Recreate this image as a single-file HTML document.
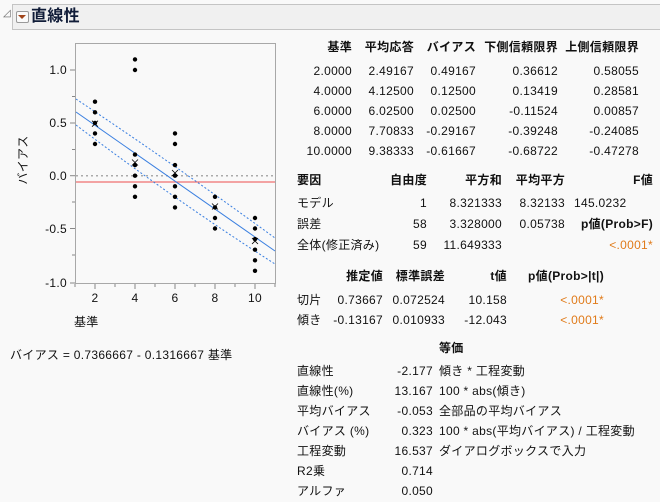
<!DOCTYPE html>
<html><head><meta charset="utf-8"><style>
body{margin:0;width:660px;height:502px;background:#f9f9f9;font-family:"Liberation Sans","Noto Sans CJK JP",sans-serif;font-size:12px;color:#111;position:relative;overflow:hidden;letter-spacing:0.3px}
.a{position:absolute;white-space:nowrap;line-height:14px}
.b{font-weight:bold}
.r{text-align:right}
.o{color:#e07b1a}
</style></head><body>
<div class="a" style="left:3px;top:7px;font-size:10px;color:#666">◿</div>
<div style="position:absolute;left:12px;top:4px;width:650px;height:24px;background:#f0f0f0;border:1px solid #c4c4c4"></div>
<div style="position:absolute;left:16px;top:11px;width:11px;height:10px;border:1px solid #999;border-radius:2px;background:#fafafa"></div>
<div style="position:absolute;left:18px;top:15px;width:0;height:0;border-left:4px solid transparent;border-right:4px solid transparent;border-top:4px solid #a0451a"></div>
<div class="a b" style="left:31px;top:8px;font-size:16px;line-height:18px;color:#101c38">直線性</div>

<svg style="position:absolute;left:0;top:0" width="300" height="340">
<rect x="75.5" y="43.5" width="200" height="240" fill="#f9f9f9" stroke="#a8a8a8"/>
<g stroke="#888" stroke-width="1">
<line x1="70" y1="70" x2="75" y2="70"/><line x1="70" y1="123" x2="75" y2="123"/><line x1="70" y1="175.7" x2="75" y2="175.7"/><line x1="70" y1="228.5" x2="75" y2="228.5"/><line x1="70" y1="283" x2="75" y2="283"/>
<line x1="72" y1="96.5" x2="75" y2="96.5"/><line x1="72" y1="149.5" x2="75" y2="149.5"/><line x1="72" y1="202" x2="75" y2="202"/><line x1="72" y1="255" x2="75" y2="255"/>
<line x1="95" y1="284" x2="95" y2="289"/><line x1="135" y1="284" x2="135" y2="289"/><line x1="175" y1="284" x2="175" y2="289"/><line x1="215" y1="284" x2="215" y2="289"/><line x1="255" y1="284" x2="255" y2="289"/>
<line x1="75" y1="284" x2="75" y2="287"/><line x1="115" y1="284" x2="115" y2="287"/><line x1="155" y1="284" x2="155" y2="287"/><line x1="195" y1="284" x2="195" y2="287"/><line x1="235" y1="284" x2="235" y2="287"/><line x1="275" y1="284" x2="275" y2="287"/>
</g>
<g font-family="Liberation Sans" font-size="12" fill="#111" text-anchor="end" letter-spacing="0.3">
<text x="67" y="74">1.0</text><text x="67" y="127">0.5</text><text x="67" y="180">0.0</text><text x="67" y="233">-0.5</text><text x="67" y="287">-1.0</text>
</g>
<g font-family="Liberation Sans" font-size="12" fill="#111" text-anchor="middle">
<text x="95" y="302">2</text><text x="135" y="302">4</text><text x="175" y="302">6</text><text x="215" y="302">8</text><text x="255" y="302">10</text>
</g>
<text transform="translate(27,160) rotate(-90)" font-size="12" fill="#111" text-anchor="middle" font-family="Liberation Sans,Noto Sans CJK JP">バイアス</text>
<line x1="76" y1="175.7" x2="275" y2="175.7" stroke="#aaa" stroke-width="1.5" stroke-dasharray="2,3"/>
<line x1="76" y1="182" x2="275" y2="182" stroke="#f07070" stroke-width="1.2"/>
<line x1="76" y1="112" x2="275" y2="251" stroke="#3a7fe0" stroke-width="1"/>
<path d="M76 99 Q175 165 275 238" fill="none" stroke="#3a7fe0" stroke-dasharray="2,2"/>
<path d="M76 125 Q175 200 275 264" fill="none" stroke="#3a7fe0" stroke-dasharray="2,2"/>
<g fill="#000">
<circle cx="95" cy="101.7" r="2.2"/><circle cx="95" cy="112.3" r="2.2"/><circle cx="95" cy="122.9" r="2.2"/><circle cx="95" cy="133.4" r="2.2"/><circle cx="95" cy="144" r="2.2"/>
<circle cx="135" cy="59.4" r="2.2"/><circle cx="135" cy="70" r="2.2"/><circle cx="135" cy="154.6" r="2.2"/><circle cx="135" cy="165.1" r="2.2"/><circle cx="135" cy="175.7" r="2.2"/><circle cx="135" cy="186.3" r="2.2"/><circle cx="135" cy="196.8" r="2.2"/>
<circle cx="175" cy="133.4" r="2.2"/><circle cx="175" cy="144" r="2.2"/><circle cx="175" cy="165.1" r="2.2"/><circle cx="175" cy="175.7" r="2.2"/><circle cx="175" cy="186.3" r="2.2"/><circle cx="175" cy="196.8" r="2.2"/><circle cx="175" cy="207.4" r="2.2"/>
<circle cx="215" cy="196.8" r="2.2"/><circle cx="215" cy="207.4" r="2.2"/><circle cx="215" cy="218" r="2.2"/><circle cx="215" cy="228.5" r="2.2"/>
<circle cx="255" cy="218" r="2.2"/><circle cx="255" cy="228.5" r="2.2"/><circle cx="255" cy="239.1" r="2.2"/><circle cx="255" cy="249.7" r="2.2"/><circle cx="255" cy="260.3" r="2.2"/><circle cx="255" cy="270.8" r="2.2"/>
</g>
<g stroke="#000" stroke-width="0.8">
<path d="M92 120.7l6 6M98 120.7l-6 6"/><path d="M132 159.5l6 6M138 159.5l-6 6"/><path d="M172 170l6 6M178 170l-6 6"/><path d="M212 203.5l6 6M218 203.5l-6 6"/><path d="M252 238l6 6M258 238l-6 6"/>
</g>
</svg>
<div class="a" style="left:74px;top:315px">基準</div>
<div class="a" style="left:10px;top:348px">バイアス = 0.7366667 - 0.1316667 基準</div>

<div class="a b r" style="left:290px;top:40px;width:62px">基準</div>
<div class="a b r" style="left:344px;top:40px;width:70px">平均応答</div>
<div class="a b r" style="left:406px;top:40px;width:70px">バイアス</div>
<div class="a b r" style="left:468px;top:40px;width:90px">下側信頼限界</div>
<div class="a b r" style="left:549px;top:40px;width:90px">上側信頼限界</div>
<div class="a r" style="left:290px;top:61px;width:62px;line-height:20px">2.0000<br>4.0000<br>6.0000<br>8.0000<br>10.0000</div>
<div class="a r" style="left:344px;top:61px;width:70px;line-height:20px">2.49167<br>4.12500<br>6.02500<br>7.70833<br>9.38333</div>
<div class="a r" style="left:396px;top:61px;width:80px;line-height:20px">0.49167<br>0.12500<br>0.02500<br>-0.29167<br>-0.61667</div>
<div class="a r" style="left:468px;top:61px;width:90px;line-height:20px">0.36612<br>0.13419<br>-0.11524<br>-0.39248<br>-0.68722</div>
<div class="a r" style="left:549px;top:61px;width:90px;line-height:20px">0.58055<br>0.28581<br>0.00857<br>-0.24085<br>-0.47278</div>

<div class="a b" style="left:297px;top:173px">要因</div>
<div class="a b r" style="left:357px;top:173px;width:70px">自由度</div>
<div class="a b r" style="left:432px;top:173px;width:70px">平方和</div>
<div class="a b r" style="left:485px;top:173px;width:80px">平均平方</div>
<div class="a b r" style="left:573px;top:173px;width:80px">F値</div>
<div class="a" style="left:297px;top:193px;line-height:21px">モデル<br>誤差<br>全体(修正済み)</div>
<div class="a r" style="left:367px;top:193px;width:60px;line-height:21px">1<br>58<br>59</div>
<div class="a r" style="left:422px;top:193px;width:80px;line-height:21px">8.321333<br>3.328000<br>11.649333</div>
<div class="a r" style="left:485px;top:193px;width:80px;line-height:21px">8.32133<br>0.05738</div>
<div class="a" style="left:574px;top:193px;line-height:21px">145.0232</div>
<div class="a b r" style="left:553px;top:214px;width:100px;line-height:21px">p値(Prob&gt;F)</div>
<div class="a r o" style="left:553px;top:235px;width:100px;line-height:21px">&lt;.0001*</div>

<div class="a b r" style="left:313px;top:269px;width:70px">推定値</div>
<div class="a b r" style="left:365px;top:269px;width:80px">標準誤差</div>
<div class="a b r" style="left:437px;top:269px;width:70px">t値</div>
<div class="a b r" style="left:494px;top:269px;width:110px">p値(Prob&gt;|t|)</div>
<div class="a" style="left:297px;top:290px;line-height:20px">切片<br>傾き</div>
<div class="a r" style="left:303px;top:290px;width:80px;line-height:20px">0.73667<br>-0.13167</div>
<div class="a r" style="left:365px;top:290px;width:80px;line-height:20px">0.072524<br>0.010933</div>
<div class="a r" style="left:437px;top:290px;width:70px;line-height:20px">10.158<br>-12.043</div>
<div class="a r o" style="left:490px;top:290px;width:114px;line-height:20px">&lt;.0001*<br>&lt;.0001*</div>

<div class="a b" style="left:439px;top:341px">等価</div>
<div class="a" style="left:297px;top:361px;line-height:20px">直線性<br>直線性(%)<br>平均バイアス<br>バイアス (%)<br>工程変動<br>R2乗<br>アルファ</div>
<div class="a r" style="left:353px;top:361px;width:80px;line-height:20px">-2.177<br>13.167<br>-0.053<br>0.323<br>16.537<br>0.714<br>0.050</div>
<div class="a" style="left:439px;top:361px;line-height:20px">傾き * 工程変動<br>100 * abs(傾き)<br>全部品の平均バイアス<br>100 * abs(平均バイアス) / 工程変動<br>ダイアログボックスで入力</div>
</body></html>
